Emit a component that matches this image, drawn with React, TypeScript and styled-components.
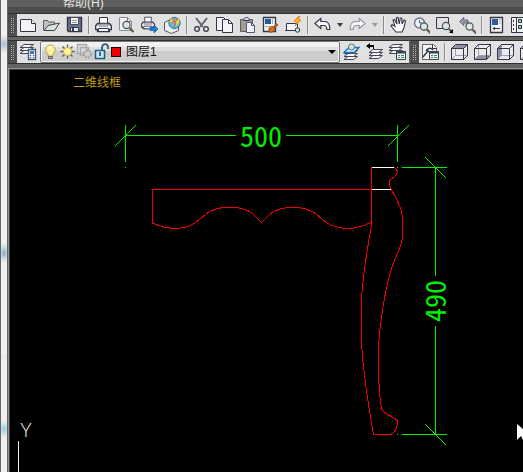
import React, { ReactNode } from 'react';
import styled, { createGlobalStyle } from 'styled-components';

const Global = createGlobalStyle`
  * { box-sizing: border-box; }
  html, body, #root { height: 100%; }
  body { margin: 0; overflow: hidden; background: #000; font-family: "Liberation Sans", "Noto Sans CJK SC", sans-serif; }
  button { font: inherit; }
`;

const Desktop = styled.div`
  display: flex;
  height: 100%;
`;

const DesktopEdge = styled.div`
  flex: none;
  width: 8px;
  border-left: 1px solid #666;
  border-right: 1px solid #666;
  background:
    radial-gradient(circle at 3px 44px, #a9bfd5 0, transparent 9px),
    radial-gradient(ellipse 6px 10px at 3px 253px, #8fa6c6 0, #c6e2e8 60%, transparent 100%),
    radial-gradient(circle at 3px 357px, #d9eeea 0, transparent 4px),
    radial-gradient(ellipse 6px 9px at 3px 429px, #a4c4de 0, #c8e6e8 60%, transparent 100%),
    #f1efef;
`;

const Window = styled.main`
  display: flex;
  flex: 1;
  flex-direction: column;
  min-width: 0;
  background: #646464;
`;

const MenuBar = styled.nav`
  display: flex;
  align-items: flex-end;
  flex: none;
  height: 13px;
  padding-left: 55px;
  background: linear-gradient(#5f5f5f 7px, #4d4d4d 7px);
`;

const MenuItem = styled.button`
  padding: 0;
  border: 0;
  background: none;
  color: #e6e6e6;
  font-size: 12px;
  line-height: 20px;
  white-space: nowrap;
`;

const ToolbarRow = styled.div<{ $last?: boolean }>`
  display: flex;
  flex: none;
  gap: 1px;
  margin-bottom: ${p => (p.$last ? 4 : 3)}px;
  overflow: hidden;
`;

const Toolbar = styled.div<{ $grow?: boolean }>`
  display: flex;
  align-items: center;
  flex: ${p => (p.$grow ? '1 0 auto' : 'none')};
  height: 24px;
  border: solid #303030;
  border-width: 1px 0;
  background: #e1e1e1;
`;

const Grip = styled.div`
  flex: none;
  align-self: stretch;
  width: 9px;
  padding: 3px;
  background:
    repeating-linear-gradient(#4d4d4d 0 1px, transparent 1px 2px) content-box,
    repeating-linear-gradient(90deg, #bbb 0 1px, #3c3c3c 1px 2px) content-box,
    #4d4d4d;
`;

const Tool = styled.button<{ $narrow?: boolean }>`
  display: flex;
  align-items: center;
  justify-content: center;
  flex: none;
  width: ${p => (p.$narrow ? 12 : 23)}px;
  height: 22px;
  padding: 0;
  border: 0;
  background: none;
`;

const Separator = styled.div`
  flex: none;
  width: 2px;
  height: 18px;
  margin: 0 2px;
  background: #8b8b8b;
  border-right: 1px solid #eee;
`;

const LayerPicker = styled.button`
  display: flex;
  align-items: center;
  flex: none;
  width: 300px;
  height: 22px;
  padding: 0 3px 0 1px;
  border: 1px solid #777;
  border-radius: 2px;
  background: linear-gradient(#f1f1f1 0 5px, #dedede 5px 9px, #cdcdcd 9px);
  box-shadow: inset 0 0 0 1px #f2f2f2;
  color: #111;
  text-align: left;
`;

const Swatch = styled.span`
  width: 10px;
  height: 10px;
  margin: 0 5px 0 1px;
  border: 1px solid #200;
  background: #f00000;
`;

const LayerName = styled.span`
  flex: 1;
  font-size: 12px;
  line-height: 18px;
`;

const Viewport = styled.section`
  position: relative;
  flex: 1;
  min-height: 0;
  margin: 1px 0 0 1px;
  border: solid #404040;
  border-width: 1px 0 0 1px;
  outline: 1px solid #929292;
  background: #000;
`;

const ViewStyle = styled.button`
  display: block;
  margin: 5px 0 0 63px;
  padding: 0;
  border: 0;
  background: none;
  color: #bd9b10;
  font-size: 12px;
  line-height: 16px;
`;

const Drawing = styled.svg`
  position: absolute;
  inset: 0;
  width: 100%;
  height: 100%;
  pointer-events: none;
`;

const DimensionText = styled.text`
  fill: #00f000;
  font-family: "Noto Sans Mono CJK SC", "Noto Sans CJK SC", sans-serif;
  font-size: 28px;
  text-anchor: middle;
`;

const AxisText = styled.text`
  fill: #fff;
  font-family: Lato, sans-serif;
  font-size: 19px;
  font-weight: 300;
  text-anchor: middle;
`;

const ink = '#35354a';
const blue = '#1b78c0';

const Glyph = ({ children, width = 17 }: { children: ReactNode; width?: number }) => (
  <svg width={width} height="18" viewBox={`0 0 ${width} 18`} fill="none" stroke={ink} aria-hidden="true">
    {children}
  </svg>
);

const Lens = ({ x, y }: { x: number; y: number }) => (
  <g>
    <path d={`M${x + 3} ${y + 3}l4 4`} stroke="#55554a" strokeWidth="2.2" />
    <circle cx={x} cy={y} r="3.6" fill="#d9e8e6" stroke="#4a5555" strokeWidth="1.2" />
  </g>
);

const Printer = () => (
  <>
    <path d="M4.5 8V1.5h8V8" fill="#fff" />
    <path d="M2.500 7.500h12l2 2.500v3.500h-2v2h-12v-2h-2V10z" fill="#e8e8f0" strokeWidth="1.400" strokeLinejoin="round" />
    <path d="M4 8h9v2H4z" fill="#c9c9d4" stroke="#77778a" strokeWidth=".8" />
    <path d="M3.500 12.500h10v3h-10z" fill="#fff" />
  </>
);

const Sheets = () => (
  <g fill="#f6f6f9" stroke="#454558">
    <path d="M1 12.500l4-3h9.500l-4 3z" />
    <path d="M1 9.500l4-3h9.500l-4 3z" />
    <path d="M1 6.500l4-3h9.500l-4 3z" />
  </g>
);

const ShiftedSheets = ({ x = 0, y = 0 }: { x?: number; y?: number }) => (
  <g transform={`translate(${x} ${y})`}><Sheets /></g>
);

const Panel = () => (
  <>
    <path d="M7.500 8.500h9v8h-9z" fill="#edf5f2" stroke="#31474a" />
    <path d="M7 9.500h10" stroke="#31474a" strokeWidth="2" />
    <path d="M9 12.500h2m1 0h3m-6 2h2m1 0h3" stroke="#557a78" />
  </>
);

const Cube = ({ face }: { face: 'top' | 'bottom' | 'left' | 'right' }) => {
  const faces = {
    top: 'M.5 5.500l4-4h12l-4 4z',
    bottom: 'M.5 16.500l4-4h12l-4 4z',
    left: 'M.5 5.500l4-4v11l-4 4z',
    right: 'M12.500 5.500l4-4v11l-4 4z',
  };
  return (
    <Glyph>
      <path d="M.5 5.500l4-4h12v11l-4 4H.5z" fill="#ececf0" />
      <path d={faces[face]} fill="#8d91a5" stroke="none" />
      <path d="M4.500 1.500v11h12M4.500 12.500l-4 4" stroke="#a0a0aa" />
      <path d="M.5 5.500l4-4h12v11l-4 4H.5zM.5 5.500h12v11M12.500 5.500l4-4" />
    </Glyph>
  );
};

const icons: Record<string, ReactNode> = {
  new: <Glyph><path d="M.5 3.500h11l4 4v8H.5z" fill="#f3f3f5" /><path d="M11.500 3.500v4h4" fill="#fff" /></Glyph>,
  open: <Glyph><path d="M.5 14V4.500h4l1 1.500h6v3" fill="#bfc4c4" stroke="#555b62" /><path d="M1 14.500l4-5 11.500-2.500-5 7.500z" fill="#dce2df" stroke="#3b4148" /></Glyph>,
  save: <Glyph><path d="M1.500 1.500h14v14h-13l-1-1z" fill="#66758f" strokeWidth="1.400" /><path d="M4.500 1.500h8v7h-8z" fill="#f1f1f1" stroke="#444b5c" /><path d="M6 4.500h5m-5 2h5" stroke="#999" /><path d="M4.500 11.500h8v4h-8z" fill="#eee" /><path d="M6 12h2v3H6z" fill={ink} stroke="none" /></Glyph>,
  print: <Glyph><Printer /></Glyph>,
  preview: <Glyph><path d="M1.500 1.500h8l4 4v9h-12z" fill="#f5f5f5" stroke="#8c8c98" /><path d="M9.500 1.500v4h4" stroke="#777788" /><Lens x={8.5} y={9} /></Glyph>,
  publish: <Glyph><g transform="scale(.82)"><Printer /></g><path d="M9 11.500h4V9l4 4-4 4v-2.500H9z" fill="#1684dc" stroke="#18558e" strokeWidth=".7" /></Glyph>,
  web: <Glyph><path d="M.5 6.500l6-3 8 3v8l-7 3-7-3z" fill="#eee" stroke="#555566" /><circle cx="10.500" cy="7" r="5.600" fill="#58bfe4" stroke="#27707d" /><path d="M6 4c3-3 5-2 3 1s-4 2-3-1m5 1c4-4 5-1 4 2l-3 3z" fill="#f0d548" stroke="none" /><path d="M8 3c4 1 5 4 2 8m-3-4c2-1 5-1 7-4" stroke="#e8664a" strokeWidth="1.300" /></Glyph>,
  cut: <Glyph><path d="M3 2l7 9M14 2l-7 9" stroke="#666676" strokeWidth="2" /><circle cx="4" cy="13" r="2.300" fill="#e1e1e1" strokeWidth="1.300" /><circle cx="13" cy="13" r="2.300" fill="#e1e1e1" strokeWidth="1.300" /></Glyph>,
  copy: <Glyph><path d="M.5 1.500h7l3 3v10H.5z" fill="#f4f4f4" /><path d="M6.500 3.500h6l4 4v9h-10z" fill="#f5f5f8" /><path d="M12.500 3.500v4h4" /></Glyph>,
  paste: <Glyph><path d="M1.500 3.500h12v12h-12z" fill="#a69b92" stroke="#585866" /><path d="M4.500 4.500c0-4 6-4 6 0z" fill="#ddd" /><path d="M7.500 6.500h5l3 3v7h-8z" fill="#f0f4ff" stroke="#555577" /><path d="M12.500 6.500v3h3" stroke="#555577" /></Glyph>,
  match: <Glyph><path d="M1.500 1.500h12v14h-12z" fill="#f4f4f4" strokeWidth="1.300" /><path d="M3 3h6v5H3z" fill="#235e9c" stroke="none" /><path d="M10.500 3v5M3 10.500h5" stroke="#aaa" /><path d="M15.500 8l-4 4" stroke="#9b623a" strokeWidth="2.500" /><path d="M7 12c2-2 4-2 6 0 0 3-3 5-6 4z" fill="#d86d13" stroke="#874210" strokeWidth=".8" /></Glyph>,
  block: <Glyph><path d="M1.500 7.500h11v7h-11z" fill="#f3f3f3" /><path d="M0 14.500h3M11 14h4" /><circle cx="12.500" cy="14" r="2.200" fill="#d9e4e1" /><path d="M14 0L9 5l3 1-2 4 6-6-3-1 2-3z" fill="#ffb52a" stroke="#dc730c" strokeWidth=".8" /></Glyph>,
  undo: <Glyph><path d="M.8 7.500l6-5v3h4c4 0 5 3 5 8h-3c0-3-1-4-3-4h-3v3z" fill="#f4fbff" strokeWidth="1.200" /></Glyph>,
  redo: <Glyph><path d="M16.200 7.500l-6-5v3h-4c-4 0-5 3-5 8h3c0-3 1-4 3-4h3v3z" fill="#f3f6f9" stroke="#9396a2" strokeWidth="1.200" /></Glyph>,
  pan: <Glyph><path d="M6 16l-5-6 1-1.500 3 2L3 4l1.500-.6L7 8l-.6-6L8 1.500 9.300 8l1-6 1.500.2L12 8l2-4 1.500.7-1.500 7-2 4.300z" fill="#fff" strokeWidth="1.100" /></Glyph>,
  zoomLive: <Glyph><circle cx="6.500" cy="7" r="5" fill="#eaf1f7" stroke="#73778c" strokeWidth="1.500" /><path d="M6.500 4v3H9" stroke="#4c607e" /><Lens x={11} y={10.5} /></Glyph>,
  zoomWindow: <Glyph><path d="M.5 1.500h12v11H.5z" /><Lens x={10} y={10} /><path d="M17 13v4h-4z" fill="#000" stroke="none" /></Glyph>,
  zoomBack: <Glyph><path d="M.7 5.500l4-4V4H9v3H4.700v2.500z" fill="#999baa" stroke="#62657a" /><Lens x={10.5} y={10.5} /></Glyph>,
  properties: <Glyph><path d="M2.500 1.500h12v15h-12z" fill="#f5f5f5" strokeWidth="1.300" /><path d="M4 3h6v6H4z" fill="#285e9d" stroke="none" /><path d="M12 3v6" stroke="#888" strokeDasharray="1 1" /><path d="M5 12.500h7M7 11l-2 1.500L7 14" /></Glyph>,
  palette: <Glyph><path d="M.5 1.500h16v15H.5zM5.500 1.500v15" fill="#f5f5f5" /><path d="M2.500 4v10" strokeDasharray="2 2" /><path d="M7.500 3.500h3v3h-3zm0 6h3v3h-3z" fill="#8cb" /></Glyph>,
  layers: <Glyph><ShiftedSheets x={-1} y={-2} /><path d="M8.500 6.500h7v10h-7z" fill="#f4f7ff" stroke="#3c526b" strokeWidth="1.300" /><path d="M10 8h4v3h-4z" fill="#437ab0" stroke="none" /><path d="M10 12.500h1m2 0h1m-4 2h1m2 0h1" /></Glyph>,
  layerCurrent: <Glyph><ShiftedSheets y={4} /><path d="M1 9.500l5-5h10l-5 5z" fill="#d5efff" stroke={blue} strokeWidth="1.400" /><circle cx="8.500" cy="4" r="3" fill="#d5e4e2" stroke="#597275" /></Glyph>,
  layerPrevious: <Glyph><ShiftedSheets x={2} y={3} /><path d="M4 0L0 3l4 3V4h3v2h1V2H4z" fill="#000" stroke="none" /></Glyph>,
  layerStates: <Glyph><ShiftedSheets x={-1} y={-2} /><Panel /></Glyph>,
  viewManager: <Glyph><path d="M.5 1.500h11l3 3v12H.5z" fill="#f4f4f4" stroke="#666677" /><path d="M10.500 1.500v4h4" /><path d="M1 14l5-6 3 2M4 8a4 4 0 017-1" strokeWidth="1.500" /><Panel /></Glyph>,
  bulb: <Glyph><path d="M6 11c-4-4-2-9 2.500-9S15 7 11 11v2H6z" fill="#fff29a" stroke="#b8a34a" /><path d="M6.500 13.500h4v2h-4z" fill="#aaa" stroke="#62626a" /><path d="M7 5.500l2-1.500" stroke="#fff" strokeWidth="2" /></Glyph>,
  sun: <Glyph><path d="M8.500 1.500v3m0 8v3m-7-7h3m8 0h3M3.500 3.500l2 2m6 6l2 2m0-10l-2 2m-6 6l-2 2" stroke="#66594a" strokeWidth="1.300" /><circle cx="8.500" cy="8.500" r="4" fill="#fff4a0" stroke="#caa84a" /></Glyph>,
  freeze: <Glyph><path d="M1.500 1.500h9v9h-9zM4.500 4.500h8v8h-8z" fill="#ddd" stroke="#aaa" strokeWidth="1.400" /><circle cx="11.500" cy="11" r="3.600" fill="#ccc" stroke="#a5a5a5" strokeWidth="2" strokeDasharray="2 1" /></Glyph>,
  lock: <Glyph><path d="M9 8V5c0-5 6-5 6-1v2" stroke="#265c7f" strokeWidth="1.800" /><path d="M2.500 7.500h9v8h-9z" fill="#c1e8f4" stroke="#235c82" strokeWidth="1.500" /><path d="M7 9v4" strokeWidth="1.500" /></Glyph>,
};

const standard: (readonly [string, string] | null)[] = [
  ['new', 'New'], ['open', 'Open'], ['save', 'Save'], null,
  ['print', 'Plot'], ['preview', 'Plot preview'], ['publish', 'Publish'], ['web', '3D DWF'], null,
  ['cut', 'Cut'], ['copy', 'Copy'], ['paste', 'Paste'], ['match', 'Match properties'], ['block', 'Block editor'], null,
];

const view: (readonly [string, string] | null)[] = [
  null, ['pan', 'Pan'], ['zoomLive', 'Zoom realtime'], ['zoomWindow', 'Zoom window'], ['zoomBack', 'Zoom previous'],
  null, ['properties', 'Properties'], ['palette', 'Tool palettes'],
];

const Tools = ({ items }: { items: (readonly [string, string] | null)[] }) => (
  <>
    {items.map((item, i) =>
      item ? <Tool key={i} aria-label={item[1]}>{icons[item[0]]}</Tool> : <Separator key={i} />
    )}
  </>
);

const Caret = ({ label, color }: { label: string; color: string }) => (
  <Tool $narrow aria-label={label}>
    <svg width="6" height="4" viewBox="0 0 6 4" aria-hidden="true"><path d="M0 0h6L3 4z" fill={color} /></svg>
  </Tool>
);

const Model = () => (
  <Drawing aria-label="Table leg drawing">
    <g transform="translate(-10 -70)" fill="none" shapeRendering="crispEdges">
      <g stroke="#00f000">
        <path d="M125.500 125v37m0 5v1M397.500 125v37m0 5v1M126 135.500h110M286 135.500h111" />
        <path d="M114.500 146.500l21-21M387.500 146.500l21-21" />
        <path d="M402 167.500h45M402 434.500h45M397 434.500h1M435.500 168v108M435.500 326v108" />
        <path d="M425.500 157.500l21 21M425.500 424.500l21 21" />
      </g>
      <g stroke="#f00000">
        <path d="M371 189.500H152.500V223C168 230 185 231 197 221.500L206 214C218 205 240 205 252 213L261.500 222.500L270 214C282 205 304 205 316 214L327 223C341 231 357 229 371 222.500" />
        <path d="M371.500 167V225C367 250 363 275 361.500 299V343C363 367 367 398 373.500 434.500H391C396 431 398 427 397.500 421C394 416 386 416 381.500 409C378 385 377 350 380.500 325C383 305 387 280 393.500 263C398 250 402 248 402.500 235V217C401 205 395 196 391 189L389.500 186V181C392 177 398 176 397.500 171L394 167" />
      </g>
      <path d="M372 167.500h22M372 189.500h19" stroke="#fff" />
      <path d="M18.500 441V2000" stroke="#eee" />
    </g>
    <g transform="translate(-10 -70)">
      <DimensionText x="261" y="147">500</DimensionText>
      <DimensionText transform="translate(446 301) rotate(-90)">490</DimensionText>
      <AxisText x="26" y="437">Y</AxisText>
      <path d="M517 424v16l4-4 3 6 3-2-3-5h6z" fill="#fff" />
    </g>
  </Drawing>
);

export default function App() {
  return (
    <>
      <Global />
      <Desktop>
        <DesktopEdge />
        <Window>
          <MenuBar><MenuItem>帮助(H)</MenuItem></MenuBar>
          <ToolbarRow>
            <Toolbar $grow role="toolbar" aria-label="Standard">
              <Grip />
              <Tools items={standard} />
              <Tool aria-label="Undo">{icons.undo}</Tool>
              <Caret label="Undo history" color={ink} />
              <Tool aria-label="Redo">{icons.redo}</Tool>
              <Caret label="Redo history" color="#999" />
              <Tools items={view} />
            </Toolbar>
          </ToolbarRow>
          <ToolbarRow $last>
            <Toolbar role="toolbar" aria-label="Layers">
              <Grip />
              <Tool aria-label="Layer properties">{icons.layers}</Tool>
              <LayerPicker aria-haspopup="listbox">
                {icons.bulb}{icons.sun}{icons.freeze}{icons.lock}
                <Swatch />
                <LayerName>图层1</LayerName>
                <svg width="8" height="4" viewBox="0 0 8 4" aria-hidden="true"><path d="M0 0h8L4 4z" fill="#000" /></svg>
              </LayerPicker>
              <Tool aria-label="Make object's layer current">{icons.layerCurrent}</Tool>
              <Tool aria-label="Layer previous">{icons.layerPrevious}</Tool>
              <Tool aria-label="Layer states">{icons.layerStates}</Tool>
            </Toolbar>
            <Toolbar $grow role="toolbar" aria-label="View">
              <Grip />
              <Tool aria-label="Named views">{icons.viewManager}</Tool>
              <Separator />
              <Tool aria-label="Top view"><Cube face="top" /></Tool>
              <Tool aria-label="Bottom view"><Cube face="bottom" /></Tool>
              <Tool aria-label="Left view"><Cube face="left" /></Tool>
              <Tool aria-label="Right view"><Cube face="right" /></Tool>
            </Toolbar>
          </ToolbarRow>
          <Viewport>
            <Model />
            <ViewStyle>二维线框</ViewStyle>
          </Viewport>
        </Window>
      </Desktop>
    </>
  );
}
